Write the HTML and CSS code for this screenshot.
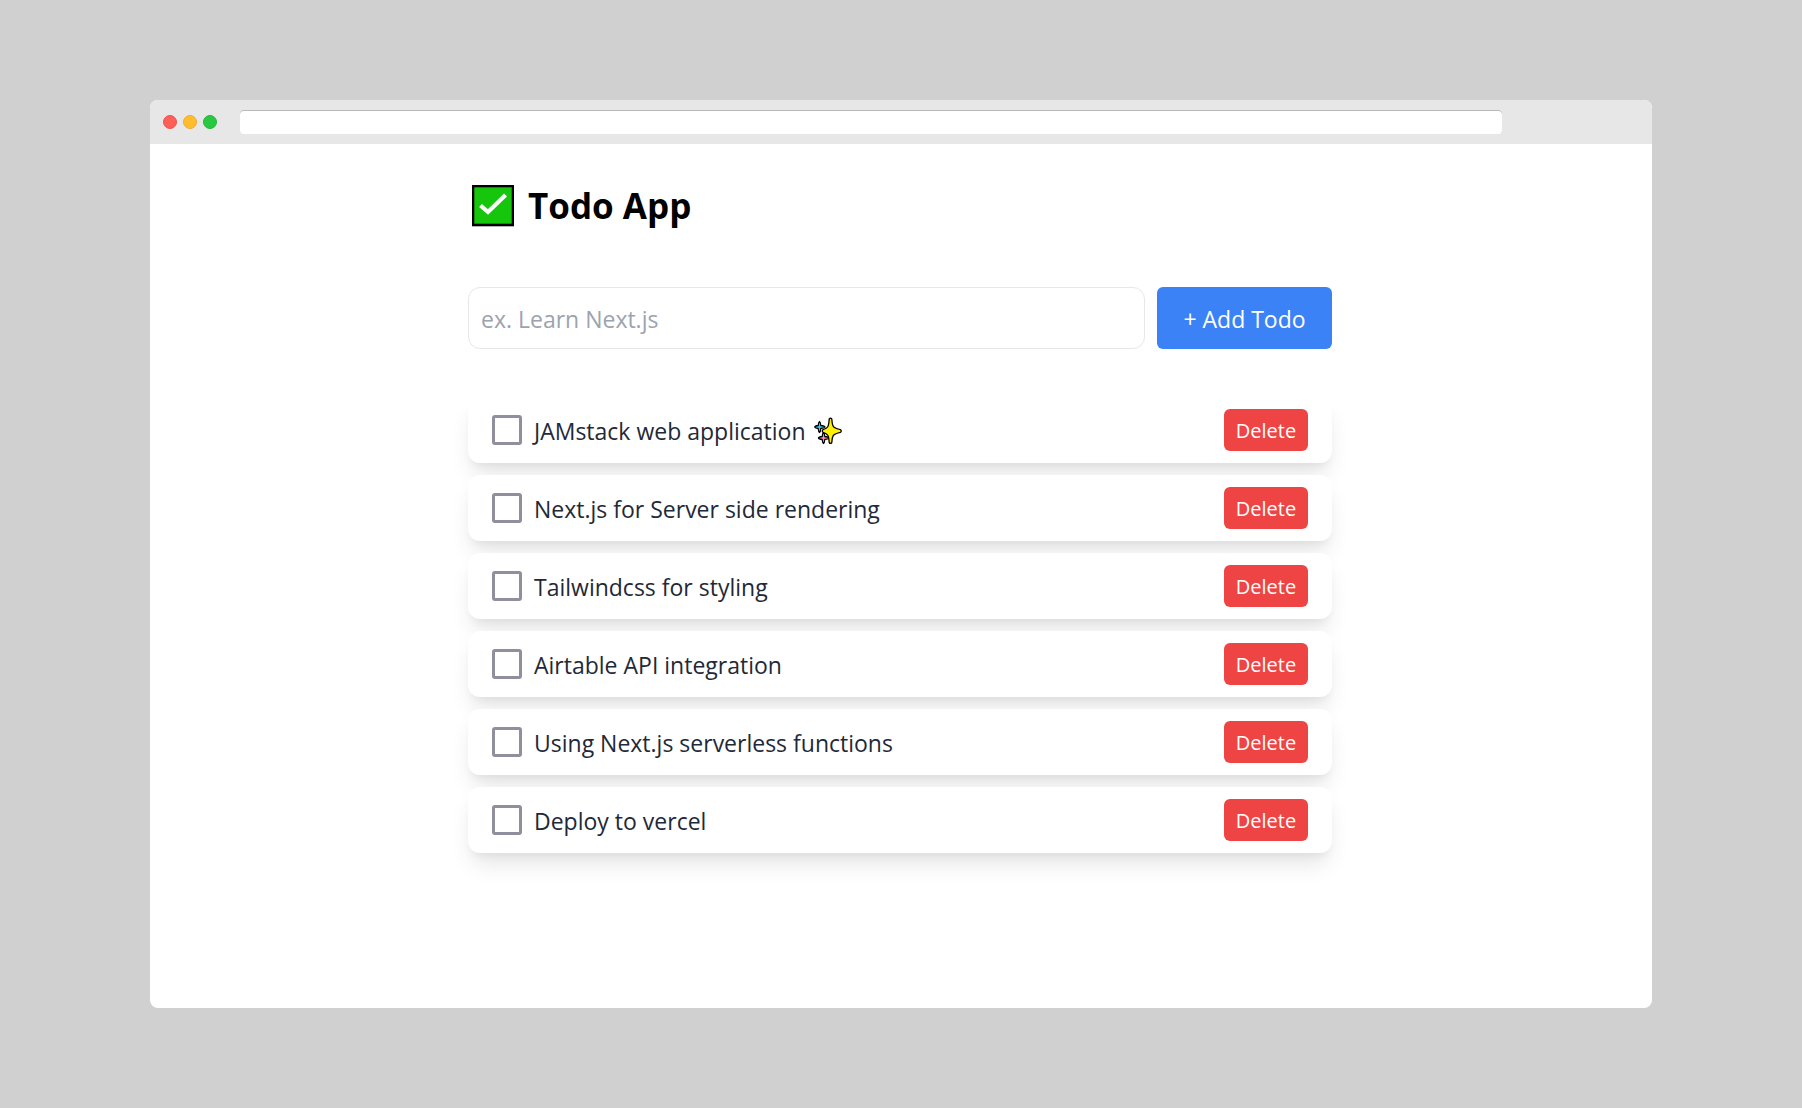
FILE: index.html
```html
<!DOCTYPE html>
<html lang="en">
<head>
<meta charset="utf-8">
<meta name="viewport" content="width=device-width, initial-scale=1">
<title>Todo App</title>
<link rel="stylesheet" href="styles.css">
</head>
<body>
<div class="window">
  <div class="titlebar">
    <div class="lights">
      <span class="light light-close"></span>
      <span class="light light-minimize"></span>
      <span class="light light-zoom"></span>
    </div>
    <input class="address" type="text" aria-label="Address">
  </div>
  <main class="app">
    <h1 class="title">
      <svg class="title-icon" viewBox="0 0 42 42" aria-hidden="true">
        <rect x="1" y="1" width="40" height="39" fill="#16c60c" stroke="#000" stroke-width="2.6"/>
        <path d="M8.500 20.500l7.500 6.500 17.500-17" fill="none" stroke="#fff" stroke-width="4.200"/>
      </svg>
      Todo App
    </h1>
    <form class="add-form">
      <input class="add-input" type="text" placeholder="ex. Learn Next.js" aria-label="New todo">
      <button class="add-button" type="submit">+ Add Todo</button>
    </form>
    <ul class="todos">
      <li class="todo">
        <input class="check" type="checkbox" id="t1">
        <label class="label" for="t1">JAMstack web application
          <svg class="sparkles" viewBox="0 0 28 28" aria-hidden="true">
            <g stroke="#000" stroke-width="1.300" stroke-linejoin="round">
              <path fill="#3fc5f0" d="M5.500 4.500Q6.500 5 6.800 8.500 10.500 9 11 10 10.500 11 6.800 11.500 6.500 15 5.500 15.500 4.500 15 4.200 11.500 .8 11 .8 10 .8 9 4.200 8.500 4.500 5 5.500 4.500z"/>
              <path fill="#f78fc0" d="M9.500 15.500Q10.500 16 10.800 19.500 14.500 20 15 21 14.500 22 10.800 22.500 10.500 26 9.500 26.500 8.500 26 8.200 22.500 4.800 22 4.500 21 4.800 20 8.200 19.500 8.500 16 9.500 15.500z"/>
              <path fill="#fff100" d="M15.200 2Q16.500 .2 17.800 2C18.300 10 19 11 26.500 12.700Q28 14 26.500 15.300C19 17 18.300 18 17.800 25.500Q16.500 27.300 15.200 25.500C14.700 18 14 17 9 15.300Q7.500 14 9 12.700C14 11 14.700 10 15.200 2z"/>
            </g>
          </svg>
        </label>
        <button class="delete" type="button">Delete</button>
      </li>
      <li class="todo">
        <input class="check" type="checkbox" id="t2">
        <label class="label" for="t2">Next.js for Server side rendering</label>
        <button class="delete" type="button">Delete</button>
      </li>
      <li class="todo">
        <input class="check" type="checkbox" id="t3">
        <label class="label" for="t3">Tailwindcss for styling</label>
        <button class="delete" type="button">Delete</button>
      </li>
      <li class="todo">
        <input class="check" type="checkbox" id="t4">
        <label class="label" for="t4">Airtable API integration</label>
        <button class="delete" type="button">Delete</button>
      </li>
      <li class="todo">
        <input class="check" type="checkbox" id="t5">
        <label class="label" for="t5">Using Next.js serverless functions</label>
        <button class="delete" type="button">Delete</button>
      </li>
      <li class="todo">
        <input class="check" type="checkbox" id="t6">
        <label class="label" for="t6">Deploy to vercel</label>
        <button class="delete" type="button">Delete</button>
      </li>
    </ul>
  </main>
</div>
</body>
</html>
```
FILE: styles.css
```css
* {
  box-sizing: border-box;
}

body {
  margin: 0;
  min-height: 100vh;
  padding: 100px 150px;
  display: flex;
  background: #d0d0d0;
  color: #1f2937;
  font-family: "Segoe UI", "Open Sans", "Noto Sans", sans-serif;
  font-size: 23px;
  line-height: 36px;
}

button,
input {
  margin: 0;
  font: inherit;
}

.window {
  flex: 1;
  min-width: 0;
  border-radius: 8px;
  overflow: hidden;
  background: #fff;
}

.titlebar {
  display: flex;
  align-items: center;
  gap: 23px;
  height: 44px;
  padding: 0 150px 0 13px;
  background: #e7e7e7;
}

.lights {
  display: flex;
  gap: 6px;
}

.light {
  width: 14px;
  height: 14px;
  border-radius: 50%;
}

.light-close {
  background: #ff5f57;
  border: 1px solid #ee544c;
}

.light-minimize {
  background: #ffbd2e;
  border: 1px solid #eeaa35;
}

.light-zoom {
  background: #28c940;
  border: 1px solid #22b63c;
}

.address {
  flex: 1;
  min-width: 0;
  height: 24px;
  padding: 0 8px;
  border: 0;
  border-radius: 4px;
  background: #fff;
  box-shadow: inset 0 1px 0 #b8b8b8;
  font-size: 14px;
}

.app {
  max-width: 866px;
  margin: 0 auto;
  padding: 36px 2px 36px 0;
}

.title {
  display: flex;
  align-items: center;
  gap: 14px;
  margin: 0 0 56px;
  padding-left: 4px;
  color: #000;
  font-size: 35px;
  font-weight: 700;
  line-height: 51px;
}

.title-icon {
  width: 42px;
  height: 42px;
}

.add-form {
  display: flex;
  gap: 12px;
  margin-bottom: 48px;
}

.add-input {
  flex: 1;
  min-width: 0;
  height: 62px;
  padding: 2px 12px 0;
  border: 1px solid #e5e7eb;
  border-radius: 12px;
  background: #fff;
  color: inherit;
}

.add-input::placeholder {
  color: #9ca3af;
  opacity: 1;
}

.add-button {
  width: 175px;
  padding: 2px 0 0;
  border: 0;
  border-radius: 6px;
  background: #3b82f6;
  color: #fff;
}

.todos {
  display: flex;
  flex-direction: column;
  gap: 12px;
  margin: 0;
  padding: 0;
  list-style: none;
}

.todo {
  display: flex;
  align-items: center;
  gap: 12px;
  padding: 12px 24px;
  border-radius: 12px;
  background: #fff;
  box-shadow: 0 15px 22px -4px rgba(0, 0, 0, 0.1), 0 6px 9px -3px rgba(0, 0, 0, 0.05);
}

.check {
  appearance: none;
  width: 30px;
  height: 30px;
  border: 3px solid #8f8f9d;
  border-radius: 3px;
  background: #fff;
}

.check:checked {
  background: #3b82f6;
}

.label {
  flex: 1;
  display: flex;
  align-items: center;
  gap: 8px;
  padding-top: 2px;
}

.sparkles {
  width: 28px;
  height: 28px;
}

.delete {
  width: 84px;
  height: 42px;
  padding: 2px 0 0;
  border: 0;
  border-radius: 6px;
  background: #ef4444;
  color: #fff;
  font-size: 20px;
}
```
